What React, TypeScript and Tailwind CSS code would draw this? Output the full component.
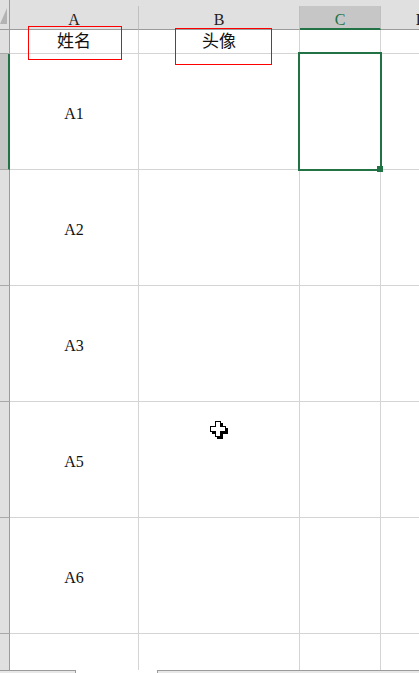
import React from "react";

const font = { fontFamily: '"Liberation Serif", "DejaVu Serif", "Noto Sans CJK SC", serif' };

function Cursor() {
  return (
    <svg width="20" height="21" viewBox="0 0 20 21" className="absolute left-[209px] top-[420px]">
      <path d="M6 1 H12 V6 H17 V12 H12 V17 H6 V12 H1 V6 H6 Z" fill="#000" transform="translate(2,2)" />
      <path d="M6 1 H12 V6 H17 V12 H12 V17 H6 V12 H1 V6 H6 Z" fill="#000" />
      <path d="M7 2 H11 V7 H16 V11 H11 V16 H7 V11 H2 V7 H7 Z" fill="#fff" />
    </svg>
  );
}

export default function App() {
  const rows = ["A1", "A2", "A3", "A5", "A6", ""];
  return (
    <div className="relative w-[419px] h-[673px] overflow-hidden bg-white" style={font}>
      {/* column header */}
      <div className="flex h-[30px] bg-[#e0e0e0] items-end">
        <div className="relative w-[10px] shrink-0 h-[30px] border-r border-b border-[#9b9b9b]">
          <svg width="8" height="18" viewBox="0 0 8 18" className="absolute left-0 top-[7px]">
            <polygon points="0,17 7,1 7,17" fill="#b3b3b3" />
          </svg>
        </div>
        <div className="w-[129px] shrink-0 h-[24px] border-r border-r-[#c0c0c0] border-b border-b-[#9b9b9b] flex items-center justify-center text-[16px] text-[#222] pt-[4px]">A</div>
        <div className="w-[161px] shrink-0 h-[24px] border-r border-r-[#c0c0c0] border-b border-b-[#9b9b9b] flex items-center justify-center text-[16px] text-[#222] pt-[4px]">B</div>
        <div className="w-[81px] shrink-0 h-[24px] bg-[#c6c6c6] border-r border-r-[#c0c0c0] border-b-2 border-b-[#217346] flex items-center justify-center text-[16px] text-[#217346] pt-[5px]">C</div>
        <div className="w-[81px] shrink-0 h-[24px] border-b border-b-[#9b9b9b] flex items-center justify-center text-[16px] text-[#222] pt-[4px]">D</div>
      </div>

      {/* body */}
      <div className="h-[640px] overflow-hidden">
        <div className="flex h-[24px]">
          <div className="w-[10px] shrink-0 bg-[#e0e0e0] border-r border-b border-r-[#9b9b9b] border-b-[#a8a8a8]" />
          <div className="w-[129px] shrink-0 border-r border-b border-[#d4d4d4] flex items-center justify-center text-[17px] text-[#111]">姓名</div>
          <div className="w-[161px] shrink-0 border-r border-b border-[#d4d4d4] flex items-center justify-center text-[17px] text-[#111] pt-[1px]">头像</div>
          <div className="w-[81px] shrink-0 border-r border-b border-[#d4d4d4]" />
          <div className="flex-1 border-b border-[#d4d4d4]" />
        </div>
        {rows.map((r, i) => (
          <div key={i} className="flex h-[116px] shrink-0">
            {i === 0 ? (
              <div className="w-[10px] shrink-0 bg-[#c6c6c6] border-r-2 border-r-[#217346] border-b border-b-[#a8a8a8]" />
            ) : (
              <div className="w-[10px] shrink-0 bg-[#e0e0e0] border-r border-b border-r-[#9b9b9b] border-b-[#a8a8a8]" />
            )}
            <div className="w-[129px] shrink-0 border-r border-b border-[#d4d4d4] flex items-center justify-center text-[16px] text-[#111] pt-[4px]">{r}</div>
            <div className="w-[161px] shrink-0 border-r border-b border-[#d4d4d4]" />
            <div className="w-[81px] shrink-0 border-r border-b border-[#d4d4d4]" />
            <div className="flex-1 border-b border-[#d4d4d4]" />
          </div>
        ))}
      </div>

      {/* bottom strip */}
      <div className="flex h-[3px]">
        <div className="w-[76px] border-t border-r border-[#9b9b9b] bg-[#e8e8e8]" />
        <div className="w-[81px]" />
        <div className="flex-1 border-t border-l border-[#9b9b9b] bg-[#e8e8e8]" />
      </div>

      {/* selection overlay */}
      <div className="absolute left-[298px] top-[52px] w-[84px] h-[119px] border-2 border-[#217346]" />
      <div className="absolute left-[377px] top-[166px] w-[6px] h-[6px] bg-[#217346]" />

      {/* red annotation boxes */}
      <div className="absolute left-[28px] top-[26px] w-[94px] h-[34px] border border-[#ff0000]" />
      <div className="absolute left-[175px] top-[28px] w-[97px] h-[37px] border border-[#ff0000]" />

      <Cursor />
    </div>
  );
}
